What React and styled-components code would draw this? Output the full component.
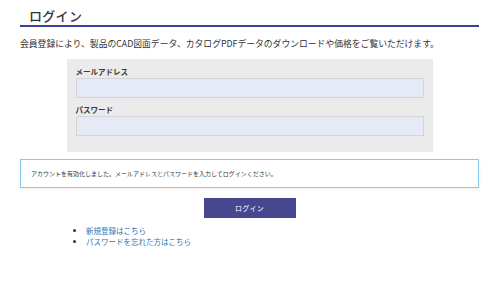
import React from "react";
import styled, { createGlobalStyle } from "styled-components";

const Global = createGlobalStyle`
  html, body { margin: 0; padding: 0; background: #fff; }
  body { font-family: "Noto Sans CJK JP", "Noto Sans", sans-serif; color: #333; }
  * { box-sizing: border-box; }
`;

const Page = styled.div`
  width: 500px;
  padding: 8px 21px 0 20px;
`;

const Title = styled.h1`
  margin: 0;
  font-size: 13px;
  font-weight: 500;
  letter-spacing: 0.3px;
  line-height: 16px;
  padding: 0 0 1px 9px;
  border-bottom: 2px solid #3d3f98;
  color: #333;
`;

const Lead = styled.p`
  margin: 10px 0 0;
  font-size: 8.8px;
  line-height: 14px;
  color: #333;
`;

const Panel = styled.form`
  width: 366px;
  margin: 8px auto 0;
  background: #ebebeb;
  padding: 7px 9px 16px;
  display: flex;
  flex-direction: column;
`;

const Label = styled.label`
  font-size: 7.5px;
  font-weight: 700;
  line-height: 12px;
  color: #3a3a3a;
  margin-top: ${(p) => (p.$first ? "0" : "6px")};
`;

const Input = styled.input`
  display: block;
  width: 348px;
  height: 20px;
  margin: 0;
  background: #e5eaf6;
  border: 1px solid #d3d4d8;
  outline: none;
`;

const Alert = styled.div`
  margin-top: 7px;
  height: 29px;
  border: 1px solid #86c9ec;
  box-shadow: 0 1px 3px rgba(0, 0, 0, 0.08);
  display: flex;
  align-items: center;
  padding-left: 10px;
  font-size: 6px;
  color: #333;
`;

const Button = styled.button`
  display: block;
  margin: 10px auto 0;
  width: 92px;
  height: 20px;
  border: none;
  background: #474790;
  color: #fff;
  font-family: inherit;
  font-size: 7px;
  letter-spacing: 0.3px;
  cursor: pointer;
`;

const Links = styled.ul`
  margin: 7px 0 0;
  padding-left: 66px;
  list-style: disc;
  font-size: 7.5px;
  line-height: 11px;
  color: #333;
`;

const Link = styled.a`
  color: #3570b5;
  text-decoration: none;
`;

export default function App() {
  return (
    <>
      <Global />
      <Page>
        <Title>ログイン</Title>
        <Lead>
          会員登録により、製品のCAD図面データ、カタログPDFデータのダウンロードや価格をご覧いただけます。
        </Lead>
        <Panel onSubmit={(e) => e.preventDefault()}>
          <Label $first>メールアドレス</Label>
          <Input type="email" />
          <Label>パスワード</Label>
          <Input type="password" />
        </Panel>
        <Alert>
          アカウントを有効化しました。メールアドレスとパスワードを入力してログインください。
        </Alert>
        <Button type="button">ログイン</Button>
        <Links>
          <li>
            <Link href="#">新規登録はこちら</Link>
          </li>
          <li>
            <Link href="#">パスワードを忘れた方はこちら</Link>
          </li>
        </Links>
      </Page>
    </>
  );
}
